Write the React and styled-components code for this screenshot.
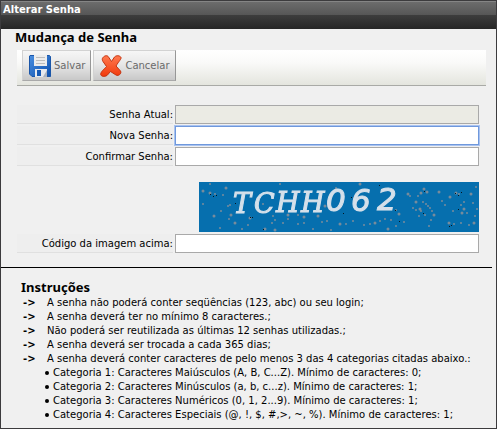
import { useState } from 'react';
import styled, { createGlobalStyle } from 'styled-components';

const GlobalStyle = createGlobalStyle`
  * {
    box-sizing: border-box;
  }

  body {
    margin: 0;
    background: #f0f0f0;
    color: #000;
    font-family: Verdana, "DejaVu Sans", sans-serif;
    font-size: 10px;
    line-height: 14px;
  }
`;

const Window = styled.main`
  min-height: 100vh;
  border: 1px solid #3c3b3d;
  background: #f0f0f0;
`;

const TitleBar = styled.header`
  height: 28px;
  padding: 1px 2px;
  border-top: 1px solid #858585;
  background: linear-gradient(#6c6c6c, #565656 13px, #3d3d3d 13px, #262626);
  color: #fff;
  font-weight: bold;
`;

const Content = styled.div`
  padding: 0 10px 0 14px;
`;

const Heading = styled.h1`
  margin: 0;
  height: 21px;
  font-family: Tahoma, "Noto Sans", sans-serif;
  font-size: 13px;
  line-height: 16px;
`;

const Toolbar = styled.div`
  display: flex;
  gap: 2px;
  height: 36px;
  margin-left: 2px;
  padding-left: 5px;
  border-bottom: 1px solid #a9aaa6;
  background: linear-gradient(#fff, #fafaf9 35%, #e4e5de);
`;

const ToolButton = styled.button`
  display: flex;
  align-items: center;
  gap: 3px;
  height: 31px;
  padding: 0 5px 0 6px;
  border: 1px solid #d2d2d2;
  border-right-color: #979797;
  border-bottom-color: #a9a9a9;
  background: linear-gradient(#f6f6f6, #e8e8e8 45%, #c8c8c8);
  color: #6a6a6a;
  font-family: inherit;
  font-size: 10px;
  cursor: pointer;
`;

const Form = styled.form`
  display: flex;
  flex-direction: column;
  gap: 2px;
  padding: 19px 7px 0 2px;
`;

const Row = styled.div`
  display: flex;
  gap: 2px;
`;

const Label = styled.label`
  width: 156px;
  height: 19px;
  border-bottom: 1px solid #e0e0e0;
  background: #eee;
  line-height: 19px;
  text-align: right;
`;

const Field = styled.input`
  flex: 1;
  min-width: 0;
  height: 19px;
  padding: 0 3px;
  border: 1px solid #a9a9a9;
  background: #fff;
  font-family: inherit;
  font-size: 10px;

  &:disabled {
    background: #ebebe4;
  }

  &:focus {
    border-color: #6f98dc;
    outline: 1px solid #a9c3f0;
    outline-offset: 0;
  }
`;

const Captcha = styled.svg`
  align-self: flex-end;
  margin-top: 14px;
`;

const Divider = styled.hr`
  margin: 14px 4px 0 0;
  border: 0;
  border-top: 1px solid #000;
`;

const Instructions = styled.section`
  padding: 12px 10px 0 20px;
`;

const SubHeading = styled.h2`
  margin: 0;
  height: 16px;
  font-family: Tahoma, "Noto Sans", sans-serif;
  font-size: 13px;
  line-height: 15px;
`;

const RuleList = styled.ul`
  margin: 0;
  padding: 0;
  list-style: none;
`;

const Rule = styled.li`
  display: flex;
`;

const Arrow = styled.b`
  width: 26px;
  padding-left: 2px;
`;

const CategoryList = styled.ul`
  margin: 0;
  padding-left: 24px;
  list-style: none;
`;

const Category = styled.li`
  display: flex;
  align-items: center;
  gap: 4px;

  &::before {
    content: '';
    width: 4px;
    height: 4px;
    border-radius: 50%;
    background: #000;
  }
`;

const glyphs = [
  { char: 'T', x: 34, y: 31, slab: true },
  { char: 'C', x: 55, y: 31, slab: true },
  { char: 'H', x: 77, y: 30, slab: true },
  { char: 'H', x: 102, y: 30, slab: true },
  { char: '0', x: 127, y: 29 },
  { char: '6', x: 152, y: 29 },
  { char: '2', x: 178, y: 28 },
];

const specks = [
  [4, 9], [4, 22], [11, 2], [11, 11], [16, 12], [24, 13], [27, 6], [22, 29], [21, 46], [15, 34],
  [31, 23], [29, 24], [32, 33], [30, 37], [38, 11], [36, 41], [43, 47], [49, 43], [51, 36], [58, 24],
  [64, 22], [66, 47], [73, 41], [74, 34], [76, 48], [76, 38], [81, 2], [82, 11], [84, 41], [89, 37],
  [89, 33], [99, 33], [99, 42], [105, 35], [105, 41], [114, 47], [119, 34], [123, 40], [128, 39], [126, 24],
  [132, 48], [137, 6], [141, 42], [147, 42], [154, 39], [161, 2], [165, 43], [171, 42], [176, 41], [181, 39],
  [186, 37], [189, 47], [192, 38], [197, 28], [200, 32], [197, 44], [205, 40], [209, 12], [211, 14], [214, 26],
  [217, 20], [219, 14], [220, 34], [221, 27], [222, 29], [224, 20], [225, 7], [227, 22], [229, 24], [228, 10],
  [231, 26], [233, 29], [222, 11], [217, 28], [226, 33], [235, 33], [232, 38], [230, 44], [240, 10], [243, 19],
  [246, 23], [251, 15], [254, 29], [255, 42], [257, 11], [260, 12], [262, 23], [263, 31], [262, 41], [265, 20],
  [265, 27], [268, 31], [270, 43], [272, 12], [274, 21], [276, 34], [275, 41], [278, 27], [277, 5], [250, 41],
];

const pits = [
  [11, 12], [14, 14], [17, 13], [36, 21], [51, 35], [53, 35], [64, 47], [144, 31], [152, 15], [180, 3],
  [196, 28], [200, 39], [224, 31], [225, 9], [256, 11], [259, 13], [259, 27], [252, 43], [250, 44], [262, 10],
];

const rules = [
  'A senha não poderá conter seqüências (123, abc) ou seu login;',
  'A senha deverá ter no mínimo 8 caracteres.;',
  'Não poderá ser reutilizada as últimas 12 senhas utilizadas.;',
  'A senha deverá ser trocada a cada 365 dias;',
  'A senha deverá conter caracteres de pelo menos 3 das 4 categorias citadas abaixo.:',
];

const categories = [
  'Categoria 1: Caracteres Maiúsculos (A, B, C...Z). Mínimo de caracteres: 0;',
  'Categoria 2: Caracteres Minúsculos (a, b, c...z). Mínimo de caracteres: 1;',
  'Categoria 3: Caracteres Numéricos (0, 1, 2...9). Mínimo de caracteres: 1;',
  'Categoria 4: Caracteres Especiais (@, !, $, #,>, ~, %). Mínimo de caracteres: 1;',
];

function SaveIcon() {
  return (
    <svg width="22" height="22" viewBox="0 0 22 22" aria-hidden="true">
      <defs>
        <linearGradient id="disk" x1="0" y1="0" x2="1" y2="1">
          <stop offset="0" stopColor="#4b8fe0" />
          <stop offset="1" stopColor="#0b4fae" />
        </linearGradient>
      </defs>
      <path d="M1 0.5H20.5L21.5 1.5V21.5H3L0.5 19V1Z" fill="url(#disk)" stroke="#1b56a8" />
      <rect x="5" y="0" width="13" height="11" fill="#ececec" />
      <path d="M7 2.5H16M7 5.5H16M7 8.5H16" stroke="#bdbdbd" />
      <path d="M6 14H18V22H6Z" fill="#e6e9ee" />
      <path d="M8 15H12V21H8Z" fill="#1659b4" />
      <path d="M14 22L18 15V22Z" fill="#a9b2bf" />
    </svg>
  );
}

function CancelIcon() {
  return (
    <svg width="22" height="22" viewBox="0 0 22 22" aria-hidden="true">
      <defs>
        <linearGradient id="cross" x1="0" y1="0" x2="0" y2="1">
          <stop offset="0" stopColor="#ff7a50" />
          <stop offset="1" stopColor="#f13a0c" />
        </linearGradient>
      </defs>
      <path
        d="M3 2.5C4.5 0.5 7.5 0 8.5 2L11.5 6.5L14.5 2C16.5 0 20 0.5 21 2.5C21.5 4 19 6 16 11L20.5 16C22 18.5 18.5 21.5 16 20L10.5 16.5L7 20.5C4.5 22 1 21.5 0.7 19.5C0.5 17 3.5 15 6.5 11.5L3 6.5C2 5 2 3.5 3 2.5Z"
        fill="url(#cross)"
        stroke="#c4330f"
      />
    </svg>
  );
}

function CaptchaImage() {
  return (
    <Captcha width="280" height="50" viewBox="0 0 280 50" role="img">
      <rect width="280" height="50" fill="#066fae" />
      {specks.map(([x, y], index) => (
        <circle key={`${x}-${y}`} cx={x} cy={y} r={index % 3 ? 1 : 1.5} fill="#8c9199" opacity="0.85" />
      ))}
      <g fill="#d5e0ea" stroke="#d5e0ea" fontStyle="italic">
        {glyphs.map(({ char, x, y, slab }) => (
          <text
            key={x}
            x={x}
            y={y}
            fontFamily={slab ? '"DejaVu Serif", serif' : '"DejaVu Sans", sans-serif'}
            fontSize={slab ? 27 : 31}
          >
            {char}
          </text>
        ))}
      </g>
      {pits.map(([x, y]) => (
        <rect key={`${x}-${y}`} x={x} y={y} width="1" height="1" fill="#04151f" />
      ))}
    </Captcha>
  );
}

function App() {
  const [values, setValues] = useState({ nova: '', confirmar: '', codigo: '' });

  const handleChange = (e) => setValues({ ...values, [e.target.name]: e.target.value });

  return (
    <>
      <GlobalStyle />
      <Window>
        <TitleBar>Alterar Senha</TitleBar>
        <Content>
          <Heading>Mudança de Senha</Heading>
          <Toolbar>
            <ToolButton type="submit" form="senha"><SaveIcon />Salvar</ToolButton>
            <ToolButton type="reset" form="senha"><CancelIcon />Cancelar</ToolButton>
          </Toolbar>
          <Form
            id="senha"
            onSubmit={(e) => e.preventDefault()}
            onReset={() => setValues({ nova: '', confirmar: '', codigo: '' })}
          >
            <Row>
              <Label htmlFor="atual">Senha Atual:</Label>
              <Field id="atual" type="password" disabled />
            </Row>
            <Row>
              <Label htmlFor="nova">Nova Senha:</Label>
              <Field id="nova" name="nova" type="password" value={values.nova} onChange={handleChange} autoFocus />
            </Row>
            <Row>
              <Label htmlFor="confirmar">Confirmar Senha:</Label>
              <Field id="confirmar" name="confirmar" type="password" value={values.confirmar} onChange={handleChange} />
            </Row>
            <CaptchaImage />
            <Row>
              <Label htmlFor="codigo">Código da imagem acima:</Label>
              <Field id="codigo" name="codigo" type="text" value={values.codigo} onChange={handleChange} />
            </Row>
          </Form>
        </Content>
        <Divider />
        <Instructions>
          <SubHeading>Instruções</SubHeading>
          <RuleList>
            {rules.map((rule) => (
              <Rule key={rule}><Arrow>-&gt;</Arrow>{rule}</Rule>
            ))}
          </RuleList>
          <CategoryList>
            {categories.map((category) => (
              <Category key={category}>{category}</Category>
            ))}
          </CategoryList>
        </Instructions>
      </Window>
    </>
  );
}

export default App;
